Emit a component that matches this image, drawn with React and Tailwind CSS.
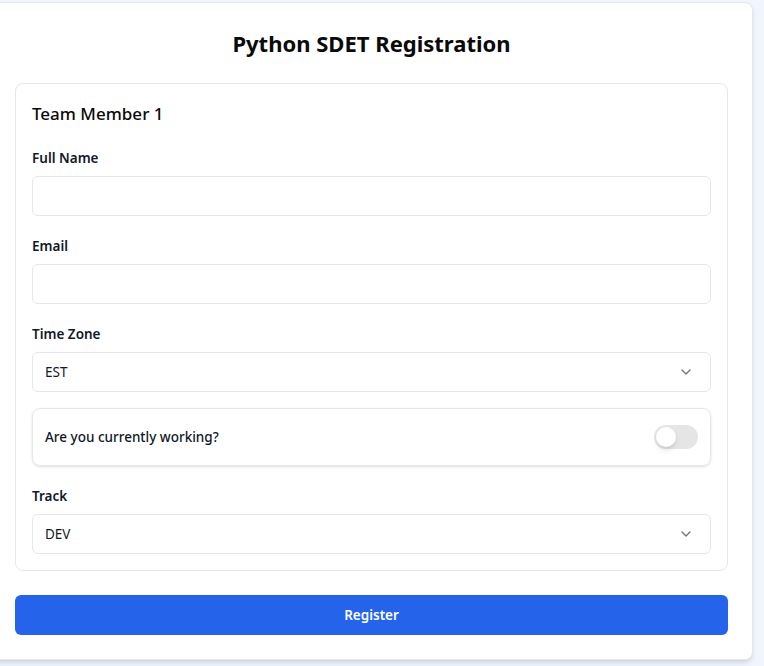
import React from "react";

function Chevron() {
  return (
    <svg width="16" height="16" viewBox="0 0 24 24" fill="none" stroke="#6b7280" strokeWidth="2" strokeLinecap="round" strokeLinejoin="round">
      <path d="m6 9 6 6 6-6" />
    </svg>
  );
}

function Field({ label, children, className = "" }) {
  return (
    <div className={className}>
      <div className="text-[13.5px] leading-5 font-semibold text-[#111827] mb-2">{label}</div>
      {children}
    </div>
  );
}

function TextInput() {
  return <div className="h-10 w-full rounded-md border border-[#e5e7eb] bg-white" />;
}

function Select({ value }) {
  return (
    <div className="h-10 w-full rounded-md border border-[#e5e7eb] bg-white flex items-center justify-between pl-3 pr-4">
      <span className="text-[13.5px] text-[#111827]">{value}</span>
      <Chevron />
    </div>
  );
}

export default function App() {
  return (
    <div
      className="min-h-[666px] w-full bg-[#f1f5fd] flex justify-end overflow-hidden pt-[2px]"
      style={{ fontFamily: '"Noto Sans", "Open Sans", sans-serif' }}
    >
      <div className="shrink-0 w-[763px] mr-[11px] h-[658px] bg-white border border-[#e5e7eb] rounded-lg shadow-md px-6 pt-6 pb-6">
        <h1 className="text-[22px] leading-8 font-bold text-center text-[#0a0a0a] mb-6">Python SDET Registration</h1>
        <div className="rounded-lg border border-[#e5e7eb] p-4">
          <h2 className="text-[17px] leading-7 font-medium text-[#0a0a0a] mb-5">Team Member 1</h2>
          <Field label="Full Name">
            <TextInput />
          </Field>
          <Field label="Email" className="mt-5">
            <TextInput />
          </Field>
          <Field label="Time Zone" className="mt-5">
            <Select value="EST" />
          </Field>
          <div className="mt-4 rounded-lg border border-[#e5e7eb] px-3 py-4 flex items-center justify-between shadow-sm">
            <span className="text-[13.5px] leading-6 font-medium text-[#111827]">Are you currently working?</span>
            <div className="w-11 h-6 rounded-full bg-[#e5e5e5] p-[2px] flex items-center">
              <div className="w-5 h-5 rounded-full bg-white shadow-md" />
            </div>
          </div>
          <Field label="Track" className="mt-5">
            <Select value="DEV" />
          </Field>
        </div>
        <button className="mt-6 w-full h-10 rounded-md bg-[#2563eb] text-white text-[13.5px] font-semibold">Register</button>
      </div>
    </div>
  );
}
